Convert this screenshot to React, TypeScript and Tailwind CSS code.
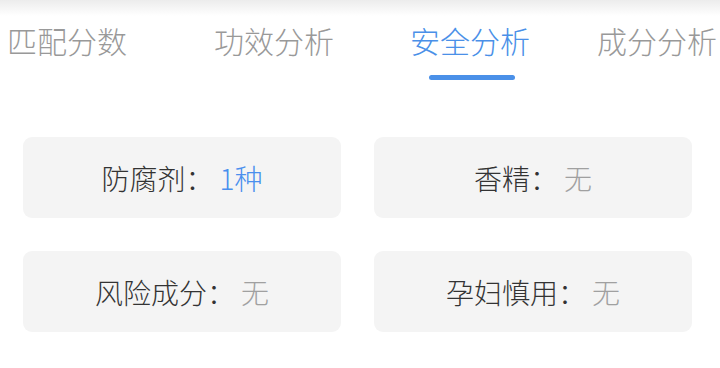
const tabs = ['匹配分数', '功效分析', '安全分析', '成分分析'];

const items = [
  { label: '防腐剂', value: '1种', highlight: true },
  { label: '香精', value: '无', highlight: false },
  { label: '风险成分', value: '无', highlight: false },
  { label: '孕妇慎用', value: '无', highlight: false },
];

export default function App() {
  return (
    <div
      className="w-[720px] h-[368px] bg-white overflow-hidden font-light"
      style={{ fontFamily: '"Noto Sans CJK SC", "Noto Sans", sans-serif' }}
    >
      <div className="h-[16px] bg-gradient-to-b from-[#ececec] to-white" />

      {/* tab bar */}
      <div className="flex h-[70px] pl-[7px] whitespace-nowrap">
        {tabs.map((t, i) => {
          const active = i === 2;
          const ml = ['ml-0', 'ml-[87px]', 'ml-[76px]', 'ml-[67px]'][i];
          return (
            <div key={t} className={`relative flex flex-col items-center ${ml}`}>
              <span
                className={`text-[30px] leading-[48px] ${active ? 'text-[#4a90e8]' : 'text-[#999999]'}`}
              >
                {t}
              </span>
              {active && <div className="mt-[11px] ml-[4px] w-[86px] h-[5px] rounded-full bg-[#4a90e8]" />}
            </div>
          );
        })}
      </div>

      {/* stats grid */}
      <div className="grid grid-cols-2 gap-x-[33px] gap-y-[33px] px-[23px] pr-[28px] mt-[51px]">
        {items.map((it) => (
          <div
            key={it.label}
            className="h-[81px] rounded-[9px] bg-[#f4f4f4] flex items-center justify-center text-[28px]"
          >
            <span className="text-[#333333]">{it.label}：</span>
            <span className={`ml-[6px] ${it.highlight ? 'text-[#4a8fee]' : 'text-[#a0a0a0]'}`}>
              {it.value}
            </span>
          </div>
        ))}
      </div>
    </div>
  );
}
